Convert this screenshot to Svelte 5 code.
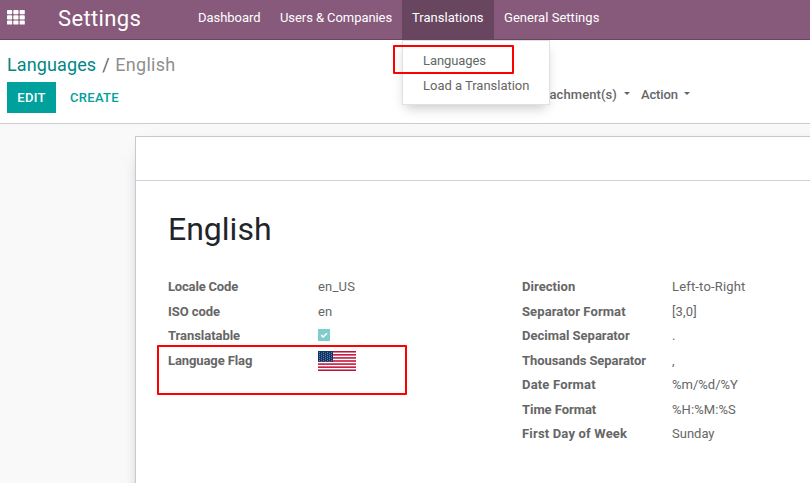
<script>
  const menu = [
    { label: 'Dashboard', width: 82, tracking: -0.03 },
    { label: 'Users & Companies', width: 132, tracking: -0.07 },
    { label: 'Translations', width: 92, active: true, tracking: 0.02 },
    { label: 'General Settings', width: 116, tracking: 0.03 }
  ];
  const left = [
    { label: 'Locale Code', value: 'en_US', tracking: -0.18, valueTracking: 0.2 },
    { label: 'ISO code', value: 'en', tracking: -0.05 },
    { label: 'Translatable', kind: 'check', tracking: -0.05 },
    { label: 'Language Flag', kind: 'flag', tracking: -0.1 }
  ];
  const right = [
    { label: 'Direction', value: 'Left-to-Right', tracking: 0.06, valueTracking: 0.17 },
    { label: 'Separator Format', value: '[3,0]', tracking: 0.1, valueTracking: 0.15 },
    { label: 'Decimal Separator', value: '.' },
    { label: 'Thousands Separator', value: ',', tracking: -0.07 },
    { label: 'Date Format', value: '%m/%d/%Y', tracking: 0.18 },
    { label: 'Time Format', value: '%H:%M:%S', tracking: -0.05, valueTracking: 0.08 },
    { label: 'First Day of Week', value: 'Sunday', tracking: 0.18 }
  ];
  const cells = [0, 1, 2];
  const stripes = [0, 1, 2, 3, 4, 5, 6];
  const starRows = [0, 1, 2, 3, 4];
  const starCols = [0, 1, 2, 3, 4, 5, 6];
</script>

{#snippet group(rows)}
  <dl class="group">
    {#each rows as row}
      <div class="row">
        <dt style="letter-spacing: {row.tracking ?? 0}px">{row.label}</dt>
        <dd style="letter-spacing: {row.valueTracking ?? 0}px">
          {#if row.kind === 'check'}
            <svg class="check" width="12" height="12" viewBox="0 0 12 12">
              <rect width="12" height="12" fill="#7fcdcb" />
              <path d="M3.2 6.2 5.2 8 9 4.3" fill="none" stroke="#fff" stroke-width="1.6" />
            </svg>
          {:else if row.kind === 'flag'}
            <svg class="flag" width="38" height="20" viewBox="0 0 38 20">
              <rect width="38" height="20" fill="#fff" />
              {#each stripes as s}
                <rect y={(s * 40) / 13} width="38" height={20 / 13} fill="#bf1238" />
              {/each}
              <rect width="15" height="10.77" fill="#113468" />
              {#each starRows as r}
                {#each starCols as c}
                  <rect x={1 + c * 2} y={1 + r * 2 + (c % 2) * 0.9} width="0.9" height="0.8" fill="#8ba3c1" />
                {/each}
              {/each}
            </svg>
          {:else}
            {row.value}
          {/if}
        </dd>
      </div>
    {/each}
  </dl>
{/snippet}

<div class="app">
  <header>
    <svg class="apps" width="18" height="15" viewBox="0 0 18 15">
      {#each cells as r}
        {#each cells as c}
          <rect x={c * 6.3} y={r * 5.2} width="5.2" height="4.2" rx="0.7" fill="#fff" />
        {/each}
      {/each}
    </svg>
    <div class="brand">Settings</div>
    <nav>
      {#each menu as item}
        <a class:active={item.active} style="width: {item.width}px; letter-spacing: {item.tracking}px">{item.label}</a>
      {/each}
    </nav>
  </header>

  <section class="control">
    <div class="crumbs"><a>Languages</a><span class="slash">/</span><span class="current">English</span></div>
    <div class="tools">
      <button class="edit">EDIT</button>
      <button class="create">CREATE</button>
      <div class="actions">
        <span class="attach">Attachment(s)</span><i class="caret"></i>
        <span class="act">Action</span><i class="caret"></i>
      </div>
    </div>
  </section>

  <main>
    <article>
      <div class="bar"></div>
      <h1>English</h1>
      <div class="groups">
        {@render group(left)}
        {@render group(right)}
      </div>
    </article>
  </main>

  <div class="dropdown">
    <a class="first">Languages</a>
    <a class="second">Load a Translation</a>
  </div>
  <div class="mark mark-menu"></div>
  <div class="mark mark-flag"></div>
</div>

<style>
  :global(body) { overflow: hidden; }
  .app {
    position: relative;
    width: 810px;
    height: 483px;
    overflow: hidden;
    display: flex;
    flex-direction: column;
    background: #f9f9f9;
    color: #666;
    font: 13px/20px Roboto, "Liberation Sans", sans-serif;
    white-space: nowrap;
  }
  header {
    height: 39px;
    flex: none;
    display: flex;
    background: #875a7b;
    border-bottom: 1px solid #68465f;
    color: #fff;
  }
  .apps { margin: 10px 0 0 7px; flex: none; }
  .brand { margin-left: 33px; width: 130px; font-size: 22px; line-height: 37px; letter-spacing: 0.35px; }
  nav { display: flex; }
  nav a { box-sizing: border-box; padding-left: 10px; line-height: 35px; height: 39px; }
  nav .active { background: #68465f; }
  .control { height: 83px; flex: none; background: #fff; border-bottom: 1px solid #ccc; }
  .crumbs { padding: 12px 0 0 7px; height: 30px; line-height: 26px; font-size: 18px; letter-spacing: 0.12px; }
  .crumbs a { color: #008784; }
  .slash { margin: 0 5.5px 0 6px; }
  .current { color: #8f8f8f; letter-spacing: 0.28px; }
  .tools { display: flex; padding-left: 7px; }
  button { border: 0; padding: 0; height: 31px; font: 500 13px/31px Roboto, sans-serif; background: none; color: #00a09d; letter-spacing: 0.3px; }
  .edit { width: 49px; background: #00a09d; color: #fff; }
  .create { margin-left: 14px; width: 49px; }
  .actions { display: flex; margin-left: 411px; font-weight: 500; line-height: 25px; }
  .attach { width: 93px; display: flex; justify-content: flex-end; margin-left: -6px; letter-spacing: 0.1px; }
  .act { margin-left: 11px; letter-spacing: -0.15px; }
  .caret { width: 0; height: 0; margin: 10px 0 0 7px; border: 3px solid transparent; border-top-color: #666; border-bottom: 0; }
  .act + .caret { margin-left: 6px; }
  main { flex: 1; padding: 12px 0 0 135px; }
  article { width: 760px; height: 460px; background: #fff; border: 1px solid #c8c8d3; box-shadow: 0 5px 20px -15px #000; }
  .bar { height: 43px; border-bottom: 1px solid #cfd0d8; }
  h1 { margin: 28px 0 0 32px; font-size: 32px; line-height: 40px; font-weight: 400; color: #212529; }
  .groups { display: flex; padding: 28px 0 0 32px; }
  .group { margin: 0; width: 354px; }
  .row { display: flex; height: 24.5px; }
  dt { width: 150px; font-weight: 700; }
  dd { margin: 0; }
  .check { display: block; margin-top: 3px; }
  .flag { display: block; margin-top: 0.5px; }
  .dropdown {
    position: absolute;
    left: 402px;
    top: 40px;
    width: 146px;
    height: 63px;
    display: flex;
    flex-direction: column;
    background: #fff;
    border: 1px solid #dee2e6;
    box-shadow: 0 6px 12px -4px rgba(0, 0, 0, 0.25);
  }
  .dropdown a { margin-left: 20px; line-height: 25px; letter-spacing: -0.02px; }
  .dropdown .first { margin-top: 7px; letter-spacing: -0.08px; }
  .mark { position: absolute; box-sizing: border-box; border: 2px solid #f00; border-radius: 1px; }
  .mark-menu { left: 393px; top: 45px; width: 121px; height: 29px; }
  .mark-flag { left: 157px; top: 345px; width: 250px; height: 50px; }
</style>
